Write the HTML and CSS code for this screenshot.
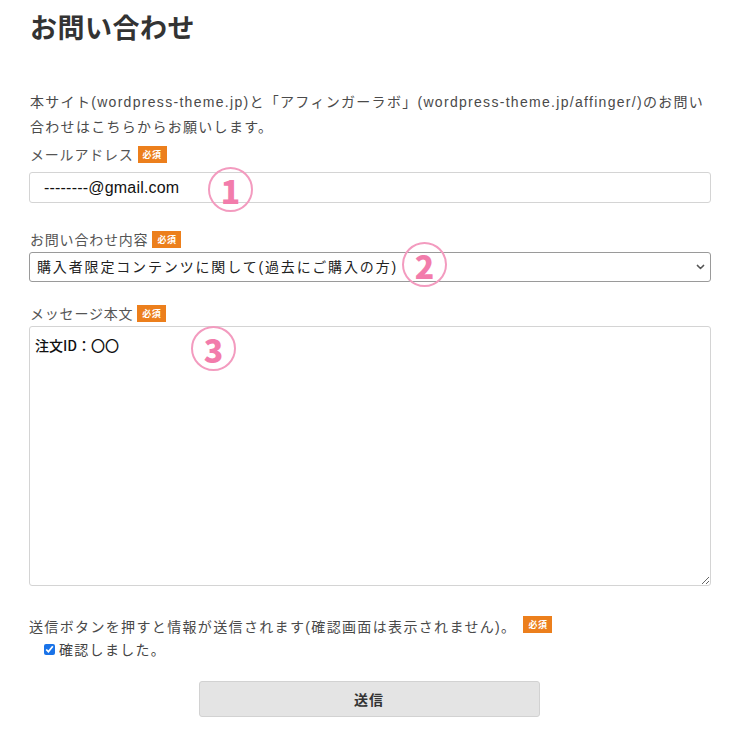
FILE: index.html
```html
<!DOCTYPE html>
<html lang="ja">
<head>
<meta charset="utf-8">
<title>お問い合わせ</title>
<link rel="stylesheet" href="styles.css">
</head>
<body>
<main class="page">
  <h1 class="title">お問い合わせ</h1>
  <p class="lead">本サイト(wordpress-theme.jp)と「アフィンガーラボ」(wordpress-theme.jp/affinger/)のお問い<br>合わせはこちらからお願いします。</p>

  <form class="form">
    <div class="field field-email">
      <div class="label">メールアドレス <span class="req">必須</span></div>
      <div class="control">
        <input class="input" type="text" value="--------@gmail.com">
        <span class="num num-1">1</span>
      </div>
    </div>

    <div class="field field-kind">
      <div class="label">お問い合わせ内容 <span class="req">必須</span></div>
      <div class="control">
        <select class="select">
          <option>購入者限定コンテンツに関して(過去にご購入の方)</option>
        </select>
        <span class="num num-2">2</span>
      </div>
    </div>

    <div class="field field-msg">
      <div class="label">メッセージ本文 <span class="req">必須</span></div>
      <div class="control">
        <textarea class="textarea">注文ID：〇〇</textarea>
        <span class="num num-3">3</span>
      </div>
    </div>

    <div class="consent">
      <div class="consent-text">送信ボタンを押すと情報が送信されます(確認画面は表示されません)。 <span class="req">必須</span></div>
      <label class="check"><input type="checkbox" checked><span>確認しました。</span></label>
    </div>

    <div class="actions">
      <button type="button" class="submit">送信</button>
    </div>
  </form>
</main>
</body>
</html>
```

FILE: styles.css
```css
html, body {
  margin: 0;
  padding: 0;
  background: #ffffff;
}

body {
  font-family: "Liberation Sans", "Noto Sans CJK JP", sans-serif;
  color: #444444;
}

.page {
  width: 682px;
  padding: 8px 0 0 29px;
}

.title {
  margin: 0 0 0 1px;
  font-family: "Noto Sans CJK JP", sans-serif;
  font-size: 27px;
  line-height: 38px;
  font-weight: 700;
  letter-spacing: 0.5px;
  color: #333333;
}

.lead {
  margin: 44px 0 0 1px;
  font-size: 14px;
  line-height: 25px;
  letter-spacing: 1.3px;
  color: #4a4a4a;
  white-space: nowrap;
}

.form {
  margin-top: 4px;
}

.field {
  display: flex;
  flex-direction: column;
}

.label {
  display: flex;
  align-items: center;
  height: 20px;
  margin-left: 1px;
  font-size: 14px;
  letter-spacing: 0.8px;
  color: #555555;
}

.req {
  display: inline-flex;
  align-items: center;
  justify-content: center;
  width: 29px;
  height: 17px;
  margin-left: 4px;
  background: #ec7f1c;
  color: #ffffff;
  font-family: "Noto Sans CJK JP", sans-serif;
  font-size: 9px;
  letter-spacing: 0.5px;
  font-weight: 700;
}

.control {
  position: relative;
}

.field-email .control { margin-top: 8px; }
.field-kind { margin-top: 26px; }
.field-kind .control { margin-top: 3px; }
.field-msg { margin-top: 21px; }
.field-msg .control { margin-top: 3px; }

.input {
  box-sizing: border-box;
  display: block;
  width: 682px;
  height: 31px;
  padding: 0 14px;
  border: 1px solid #d4d4d4;
  border-radius: 3px;
  background: #ffffff;
  font-family: "Liberation Sans", sans-serif;
  font-size: 16px;
  letter-spacing: 0.2px;
  color: #111111;
  outline: none;
}

.select {
  box-sizing: border-box;
  display: block;
  width: 682px;
  height: 30px;
  padding: 0 24px 0 7px;
  border: 1px solid #9a9a9a;
  border-radius: 3px;
  -webkit-appearance: none;
  appearance: none;
  background-color: #ffffff;
  background-image: url("data:image/svg+xml,%3Csvg xmlns='http://www.w3.org/2000/svg' width='10' height='6' viewBox='0 0 10 6'%3E%3Cpath d='M1.5 1.2 L5 4.6 L8.5 1.2' fill='none' stroke='%23555' stroke-width='1.6' stroke-linecap='round' stroke-linejoin='round'/%3E%3C/svg%3E");
  background-repeat: no-repeat;
  background-position: right 5px center;
  background-size: 9px 6px;
  font-family: "Liberation Sans", "Noto Sans CJK JP", sans-serif;
  font-size: 14px;
  letter-spacing: 1.85px;
  color: #222222;
}

.textarea {
  box-sizing: border-box;
  display: block;
  width: 682px;
  height: 260px;
  padding: 9px 5px;
  margin: 0;
  border: 1px solid #d4d4d4;
  border-radius: 3px;
  background: #ffffff;
  font-family: "Noto Sans CJK JP", sans-serif;
  font-size: 14px;
  font-weight: 500;
  line-height: 18px;
  color: #111111;
  resize: both;
  outline: none;
}

.num {
  position: absolute;
  box-sizing: border-box;
  width: 45px;
  height: 45px;
  border: 2px solid #f39bbf;
  border-radius: 50%;
  display: flex;
  align-items: center;
  justify-content: center;
  font-family: "Noto Sans CJK JP", sans-serif;
  font-size: 32px;
  font-weight: 900;
  line-height: 1;
  color: #f27cab;
  background: transparent;
}

.num-1 { left: 179px; top: -5px; }
.num-2 { left: 373px; top: -10px; }
.num-3 { left: 162px; top: 0px; }

.consent {
  margin-top: 30px;
}

.consent-text {
  display: flex;
  align-items: center;
  height: 20px;
  font-size: 14px;
  letter-spacing: 1.35px;
  color: #4a4a4a;
  white-space: nowrap;
}

.consent-text .req {
  margin-left: 7px;
  margin-top: -3px;
}

.check {
  display: flex;
  align-items: center;
  height: 20px;
  margin-top: 3px;
  padding-left: 14px;
  font-size: 14px;
  letter-spacing: 1.3px;
  color: #444444;
}

.check input {
  width: 11px;
  height: 11px;
  margin: 0 4px 0 1px;
  accent-color: #1a73e8;
}

.actions {
  display: flex;
  justify-content: center;
  margin-top: 22px;
}

.submit {
  width: 341px;
  height: 36px;
  margin-left: -2px;
  border: 1px solid #d2d2d2;
  border-radius: 3px;
  background: #e4e4e4;
  font-family: "Noto Sans CJK JP", sans-serif;
  font-size: 14px;
  font-weight: 700;
  letter-spacing: 1px;
  color: #333333;
}
```
